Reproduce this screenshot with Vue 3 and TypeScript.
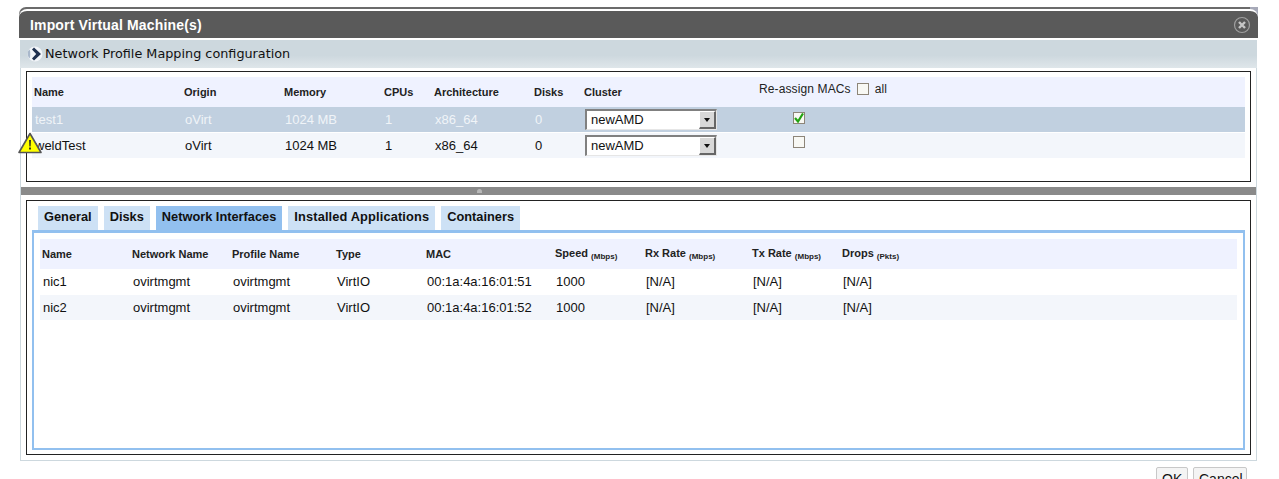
<script setup lang="ts">
import { ref } from 'vue'

interface Vm {
  name: string
  origin: string
  memory: string
  cpus: string
  arch: string
  disks: string
  cluster: string
  reassign: boolean
}

interface Nic {
  name: string
  network: string
  profile: string
  type: string
  mac: string
  speed: string
  rx: string
  tx: string
  drops: string
}

const vms = ref<Vm[]>([
  { name: 'test1', origin: 'oVirt', memory: '1024 MB', cpus: '1', arch: 'x86_64', disks: '0', cluster: 'newAMD', reassign: true },
  { name: 'weldTest', origin: 'oVirt', memory: '1024 MB', cpus: '1', arch: 'x86_64', disks: '0', cluster: 'newAMD', reassign: false },
])

const nics = ref<Nic[]>([
  { name: 'nic1', network: 'ovirtmgmt', profile: 'ovirtmgmt', type: 'VirtIO', mac: '00:1a:4a:16:01:51', speed: '1000', rx: '[N/A]', tx: '[N/A]', drops: '[N/A]' },
  { name: 'nic2', network: 'ovirtmgmt', profile: 'ovirtmgmt', type: 'VirtIO', mac: '00:1a:4a:16:01:52', speed: '1000', rx: '[N/A]', tx: '[N/A]', drops: '[N/A]' },
])

const tabs = ['General', 'Disks', 'Network Interfaces', 'Installed Applications', 'Containers']
const activeTab = ref('Network Interfaces')
</script>

<template>
  <div class="page">
    <div class="dialog">
      <div class="head">
        <div class="title-bar">
          <span class="title">Import Virtual Machine(s)</span>
          <svg class="close" width="18" height="18" viewBox="0 0 18 18">
            <circle cx="9" cy="9" r="7.5" fill="none" stroke="#a0a0a0" stroke-width="1.2" />
            <path d="M6 6l6 6M12 6l-6 6" stroke="#c6c6c6" stroke-width="2.4" />
          </svg>
        </div>
      </div>
      <div class="sub-bar">
        <svg width="16" height="16" viewBox="0 0 16 16">
          <circle cx="8" cy="8" r="7.5" fill="#f2f5f9" />
          <path d="M1.2 5C.2 7.5.7 10.5 2.6 12.6 3.5 10 3.5 7 2.8 3.4z" fill="#a9b8cb" />
          <path d="M7 1.5L14 8l-7 6.5-2-2L9.2 8 5 3.5z" fill="#1f3150" />
        </svg>
        <span class="sub-title">Network Profile Mapping configuration</span>
      </div>

      <div class="body">
        <div class="panel top-panel">
          <div class="vm-row vm-head">
            <div class="c-name">Name</div>
            <div class="c-origin">Origin</div>
            <div class="c-memory">Memory</div>
            <div class="c-cpus">CPUs</div>
            <div class="c-arch">Architecture</div>
            <div class="c-disks">Disks</div>
            <div class="c-cluster">Cluster</div>
            <div class="c-mac-head">
              Re-assign MACs
              <span class="check"></span>
              all
            </div>
          </div>
          <div
            v-for="(vm, i) in vms"
            :key="vm.name"
            class="vm-row vm-data"
            :class="{ selected: i === 0, alt: i === 1 }"
          >
            <div class="c-name">
              {{ vm.name }}
              <svg v-if="i === 1" class="warn" width="24" height="22" viewBox="0 0 24 22">
                <path d="M12 1.5L23 20.5H1z" fill="#ffff00" stroke="#555" stroke-width="1.6" stroke-linejoin="round" />
                <path d="M11.1 8h1.8l-.3 6.5h-1.2zM11.1 15.6h1.8v1.8h-1.8z" fill="#222" />
              </svg>
            </div>
            <div class="c-origin">{{ vm.origin }}</div>
            <div class="c-memory">{{ vm.memory }}</div>
            <div class="c-cpus">{{ vm.cpus }}</div>
            <div class="c-arch">{{ vm.arch }}</div>
            <div class="c-disks">{{ vm.disks }}</div>
            <div class="c-cluster">
              <div class="select">
                <span class="select-value">{{ vm.cluster }}</span>
                <span class="select-btn"><i></i></span>
              </div>
            </div>
            <div class="c-mac">
              <span class="check">
                <svg v-if="vm.reassign" width="10" height="10" viewBox="0 0 10 10">
                  <path d="M1 5l3 3.5L9 .5" fill="none" stroke="#22a312" stroke-width="2.2" />
                </svg>
              </span>
            </div>
          </div>
        </div>

        <div class="splitter"><span class="grip"></span></div>

        <div class="panel bottom-panel">
          <div class="tabs">
            <div v-for="tab in tabs" :key="tab" class="tab" :class="{ active: tab === activeTab }">{{ tab }}</div>
          </div>
          <div class="tab-content">
            <div class="nic-row nic-head">
              <div class="n-name">Name</div>
              <div class="n-network">Network Name</div>
              <div class="n-profile">Profile Name</div>
              <div class="n-type">Type</div>
              <div class="n-mac">MAC</div>
              <div class="n-speed">Speed <small>(Mbps)</small></div>
              <div class="n-rx">Rx Rate <small>(Mbps)</small></div>
              <div class="n-tx">Tx Rate <small>(Mbps)</small></div>
              <div class="n-drops">Drops <small>(Pkts)</small></div>
            </div>
            <div v-for="(nic, i) in nics" :key="nic.name" class="nic-row nic-data" :class="{ alt: i === 1 }">
              <div class="n-name">{{ nic.name }}</div>
              <div class="n-network">{{ nic.network }}</div>
              <div class="n-profile">{{ nic.profile }}</div>
              <div class="n-type">{{ nic.type }}</div>
              <div class="n-mac">{{ nic.mac }}</div>
              <div class="n-speed">{{ nic.speed }}</div>
              <div class="n-rx">{{ nic.rx }}</div>
              <div class="n-tx">{{ nic.tx }}</div>
              <div class="n-drops">{{ nic.drops }}</div>
            </div>
          </div>
        </div>
      </div>

      <div class="footer">
        <button class="btn ok">OK</button>
        <button class="btn cancel">Cancel</button>
      </div>
    </div>
  </div>
</template>

<style>
html,
body {
  margin: 0;
  overflow: hidden;
  background: #fff;
}
</style>

<style scoped>
.page {
  width: 1279px;
  height: 479px;
  overflow: hidden;
  padding: 7px 21px 0 19px;
  box-sizing: border-box;
  font-family: "Liberation Sans", Arial, sans-serif;
  font-size: 13px;
  color: #111;
}

.head {
  padding-top: 2px;
  background: linear-gradient(90deg, #6b6b6b calc(100% - 8px), #a6a9b8 calc(100% - 8px));
  border-radius: 7px 0 0 0;
}

.title-bar {
  height: 27px;
  border-top: 2px solid #fff;
  background: #5a5a5a;
  border-radius: 8px 8px 0 0;
  display: flex;
  align-items: center;
  justify-content: space-between;
  padding: 0 7px 0 11px;
}

.title {
  color: #fff;
  font-size: 14px;
  font-weight: bold;
  letter-spacing: 0.16px;
}

.close {
  display: block;
}

.sub-bar {
  height: 28px;
  margin: 2px 1px 0;
  background: linear-gradient(#cdd8de 55%, #dfe6ea);
  display: flex;
  align-items: center;
  gap: 2px;
  padding-left: 7px;
}

.sub-title {
  font-family: "DejaVu Sans", sans-serif;
  font-size: 12.8px;
  color: #111;
  margin-bottom: 2px;
}

.body {
  margin: 0 1px;
  border: 1px solid #cdd8de;
  border-top: none;
  padding: 3px 0 5px;
}

.panel {
  border: 1px solid #222;
  margin: 0 5px 0 5px;
  box-sizing: border-box;
  background: #fff;
}

.top-panel {
  height: 111px;
  padding: 5px 5px 0;
}

.vm-row {
  display: flex;
  align-items: center;
}

.vm-head {
  height: 30px;
  background: #eff2ff;
  font-size: 11px;
  font-weight: bold;
  color: #222;
}

.vm-data {
  height: 25px;
  margin-bottom: 1px;
  background: #fff;
  padding-left: 0;
}

.vm-data .c-name,
.vm-data .c-origin,
.vm-data .c-memory,
.vm-data .c-cpus,
.vm-data .c-arch,
.vm-data .c-disks {
  padding-left: 3px;
}

.vm-data.selected {
  background: #c1d0e0;
  color: #f0f4f8;
}

.vm-data.alt {
  background: #f3f6fb;
}

.c-name,
.c-origin,
.c-memory,
.c-cpus,
.c-arch,
.c-disks,
.c-cluster {
  box-sizing: border-box;
  padding-left: 2px;
}

.c-name {
  width: 150px;
  position: relative;
}

.c-origin,
.c-memory,
.c-arch {
  width: 100px;
}

.c-cpus,
.c-disks {
  width: 50px;
}

.c-cluster {
  width: 175px;
}

.c-mac-head {
  font-size: 12px;
  font-weight: normal;
  letter-spacing: 0.12px;
  display: flex;
  align-items: center;
  gap: 6px;
  margin-top: -6px;
  margin-left: 2px;
}

.c-mac {
  width: 84px;
  display: flex;
  justify-content: center;
  margin-top: -4px;
}

.vm-data.alt .c-mac {
  margin-top: -8px;
}

.warn {
  position: absolute;
  left: -14px;
  top: -6px;
}

.select {
  width: 132px;
  height: 21px;
  margin-left: 1px;
  box-sizing: border-box;
  border-top: 2px solid #808080;
  border-left: 2px solid #808080;
  border-right: 1px solid #e6e6e6;
  border-bottom: 1px solid #e6e6e6;
  background: #fff;
  color: #111;
  display: flex;
  align-items: center;
  justify-content: space-between;
  padding-left: 4px;
}

.select-value {
  font-size: 13px;
  line-height: 14px;
}

.select-btn {
  width: 17px;
  height: 18px;
  box-sizing: border-box;
  background: #d8d8d8;
  border-right: 2px solid #666;
  border-bottom: 2px solid #666;
  border-top: 1px solid #fff;
  border-left: 1px solid #fff;
  display: flex;
  align-items: center;
  justify-content: center;
}

.select-btn i {
  display: block;
  width: 0;
  height: 0;
  border-left: 3px solid transparent;
  border-right: 3px solid transparent;
  border-top: 4px solid #111;
}

.check {
  width: 10px;
  height: 10px;
  border: 1px solid #8d8578;
  background: #f8f8f4;
  display: inline-flex;
  align-items: center;
  justify-content: center;
}

.splitter {
  height: 8px;
  margin: 5px 0;
  background: #8a8a8a;
  display: flex;
  align-items: center;
  padding-left: 456px;
}

.grip {
  width: 5px;
  height: 4px;
  border-radius: 3px 3px 0 0;
  background: #b8b8b8;
}

.bottom-panel {
  height: 255px;
  padding: 5px 5px 4px;
  display: flex;
  flex-direction: column;
}

.tabs {
  display: flex;
  gap: 6px;
  padding-left: 6px;
}

.tab {
  height: 24px;
  line-height: 22px;
  padding: 0 6px;
  background: #cde1f5;
  font-size: 12.8px;
  font-weight: bold;
  color: #111;
}

.tab:nth-child(4) {
  letter-spacing: 0.14px;
}

.tab.active {
  background: #92c0ef;
}

.tab-content {
  flex: 1;
  border: 2px solid #92c0ef;
  border-top-width: 3px;
  padding: 6px 6px 0;
  background: #fff;
}

.nic-row {
  display: flex;
  align-items: center;
}

.nic-head {
  height: 30px;
  background: #eff2ff;
  font-size: 11px;
  font-weight: bold;
  color: #222;
}

.nic-head small {
  font-size: 8px;
  vertical-align: -2px;
}

.nic-data {
  height: 25px;
  margin-bottom: 1px;
  background: #fff;
}

.nic-data.alt {
  background: #f3f6fb;
}

.nic-row > div {
  box-sizing: border-box;
  padding-left: 2px;
}

.nic-data > .n-name,
.nic-data > .n-network,
.nic-data > .n-profile,
.nic-data > .n-type,
.nic-data > .n-mac,
.nic-data > .n-speed,
.nic-data > .n-rx,
.nic-data > .n-tx,
.nic-data > .n-drops {
  padding-left: 3px;
}

.n-name {
  width: 90px;
}

.n-network {
  width: 100px;
}

.n-profile {
  width: 104px;
}

.n-type {
  width: 90px;
}

.n-mac {
  width: 129px;
}

.n-speed {
  width: 90px;
}

.n-rx {
  width: 107px;
}

.n-tx {
  width: 90px;
}

.footer {
  display: flex;
  justify-content: flex-end;
  gap: 5px;
  margin-top: 6px;
  padding-right: 11px;
}

.btn {
  height: 24px;
  padding: 0 5px;
  border: 1px solid #c8c8c8;
  border-radius: 2px;
  background: #f4f4f4;
  font-family: "Liberation Sans", Arial, sans-serif;
  font-size: 14px;
  color: #111;
}

.btn.ok {
  width: 32px;
}

.btn.cancel {
  width: 54px;
}
</style>
